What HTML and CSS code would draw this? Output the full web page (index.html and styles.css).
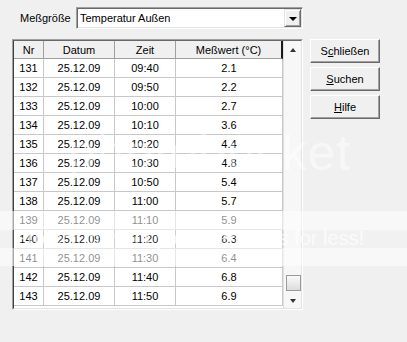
FILE: index.html
```html
<!DOCTYPE html>
<html lang="de">
<head>
  <meta charset="UTF-8">
  <title>Messwerte</title>
  <link rel="stylesheet" href="styles.css">
</head>
<body>
  <div class="dialog">
    <div class="top">
      <label for="messgroesse">Meßgröße</label>
      <div class="combo" id="messgroesse">
        <span class="value">Temperatur Außen</span>
        <span class="drop"><span class="arrow down"></span></span>
      </div>
    </div>

    <div class="main">
      <div class="list">
        <div class="list-inner">
          <table class="grid">
            <thead>
              <tr><th class="c-nr">Nr</th><th class="c-datum">Datum</th><th class="c-zeit">Zeit</th><th class="c-wert">Meßwert (°C)</th></tr>
            </thead>
            <tbody>
              <tr><td>131</td><td>25.12.09</td><td>09:40</td><td>2.1</td></tr>
              <tr><td>132</td><td>25.12.09</td><td>09:50</td><td>2.2</td></tr>
              <tr><td>133</td><td>25.12.09</td><td>10:00</td><td>2.7</td></tr>
              <tr><td>134</td><td>25.12.09</td><td>10:10</td><td>3.6</td></tr>
              <tr><td>135</td><td>25.12.09</td><td>10:20</td><td>4.4</td></tr>
              <tr><td>136</td><td>25.12.09</td><td>10:30</td><td>4.8</td></tr>
              <tr><td>137</td><td>25.12.09</td><td>10:50</td><td>5.4</td></tr>
              <tr><td>138</td><td>25.12.09</td><td>11:00</td><td>5.7</td></tr>
              <tr><td>139</td><td>25.12.09</td><td>11:10</td><td>5.9</td></tr>
              <tr><td>140</td><td>25.12.09</td><td>11:20</td><td>6.3</td></tr>
              <tr><td>141</td><td>25.12.09</td><td>11:30</td><td>6.4</td></tr>
              <tr><td>142</td><td>25.12.09</td><td>11:40</td><td>6.8</td></tr>
              <tr><td>143</td><td>25.12.09</td><td>11:50</td><td>6.9</td></tr>
            </tbody>
          </table>
          <div class="scrollbar">
            <span class="arrow up"></span>
            <span class="thumb"></span>
            <span class="arrow down"></span>
          </div>
        </div>
      </div>

      <div class="buttons">
        <button type="button">S<u>c</u>hließen</button>
        <button type="button"><u>S</u>uchen</button>
        <button type="button"><u>H</u>ilfe</button>
      </div>
    </div>
  </div>

  <!-- watermark of the original picture -->
  <div class="wm-logo">photobucket</div>
  <div class="wm-band">Protect more of your memories for less!</div>
</body>
</html>
```

FILE: styles.css
```css
body {
  margin: 0;
  width: 407px;
  height: 342px;
  background-color: #f0f0f0;
  font-family: "Liberation Sans", Arial, sans-serif;
  font-size: 11px;
  color: #000;
  position: relative;
  overflow: hidden;
}
.dialog {
  padding: 7px 0 0 12px;
}
.top {
  display: flex;
  align-items: center;
}
.top label {
  width: 56px;
  padding-left: 8px;
}
.combo {
  width: 227px;
  height: 22px;
  box-sizing: border-box;
  display: flex;
  background-color: #fff;
  border: 1px solid;
  border-color: #a0a0a0 #fff #fff #a0a0a0;
  box-shadow: inset 1px 1px 0 #696969, inset -1px -1px 0 #e3e3e3;
  padding: 1px;
}
.combo .value {
  flex: 1;
  padding-left: 2px;
  line-height: 18px;
}
.drop {
  width: 17px;
  box-sizing: border-box;
  background-color: #f0f0f0;
  border: 1px solid;
  border-color: #e3e3e3 #696969 #696969 #e3e3e3;
  box-shadow: inset 1px 1px 0 #fff, inset -1px -1px 0 #a0a0a0;
  display: flex;
  align-items: center;
  justify-content: center;
}
.arrow {
  display: block;
  width: 0;
  height: 0;
  border-left: 3px solid transparent;
  border-right: 3px solid transparent;
}
.arrow.down {
  border-top: 4px solid #000;
}
.arrow.up {
  border-bottom: 4px solid #000;
}
.drop .arrow.down {
  border-left-width: 4px;
  border-right-width: 4px;
  margin-top: 2px;
}
.main {
  display: flex;
  gap: 7px;
  margin-top: 10px;
}
.list {
  width: 291px;
  height: 271px;
  box-sizing: border-box;
  border: 1px solid;
  border-color: #a0a0a0 #fff #fff #a0a0a0;
}
.list-inner {
  height: 100%;
  box-sizing: border-box;
  border: 1px solid;
  border-color: #696969 #e3e3e3 #e3e3e3 #404040;
  background-color: #fff;
  display: flex;
  align-items: flex-start;
}
.grid {
  border-collapse: separate;
  border-spacing: 0;
  table-layout: fixed;
  width: 269px;
}
.grid th,
.grid td {
  padding: 0;
  text-align: center;
  font-weight: normal;
  border-right: 1px solid #c8c8c8;
  border-bottom: 1px solid #c8c8c8;
  white-space: nowrap;
  overflow: hidden;
}
.grid th {
  height: 17px;
  background-color: #f0f0f0;
  border-right-color: #a0a0a0;
  border-bottom-color: #a0a0a0;
}
.grid th.c-wert {
  border-right: 2px solid #1a1a1a;
}
.grid td {
  height: 18px;
}
.c-nr { width: 29px; }
.c-datum { width: 70px; }
.c-zeit { width: 60px; }
.c-wert { width: 105px; }
.scrollbar {
  width: 18px;
  height: 100%;
  background-color: #f7f7f7;
  border-left: 1px solid #e0e0e0;
  box-sizing: border-box;
  display: flex;
  flex-direction: column;
  align-items: center;
  padding: 7px 0 5px 1px;
}
.scrollbar .arrow.up {
  border-bottom-color: #333;
}
.scrollbar .thumb {
  margin-top: auto;
  width: 15px;
  height: 16px;
  box-sizing: border-box;
  border: 1px solid #9a9a9a;
  background: linear-gradient(to bottom, #fafafa, #dcdcdc);
  margin-bottom: 8px;
}
.scrollbar .arrow.down {
  border-top-color: #333;
}
.buttons {
  display: flex;
  flex-direction: column;
  gap: 4px;
}
button {
  width: 70px;
  height: 24px;
  padding: 0;
  font-family: inherit;
  font-size: 11px;
  color: #000;
  background-color: #f0f0f0;
  border: 1px solid;
  border-color: #fff #696969 #696969 #fff;
  box-shadow: inset -1px -1px 0 #a0a0a0;
}
.wm-logo {
  position: absolute;
  left: 68px;
  top: 124px;
  font-size: 50px;
  letter-spacing: 1px;
  color: rgba(255, 255, 255, 0.45);
  pointer-events: none;
}
.wm-band {
  position: absolute;
  left: 0;
  top: 211px;
  width: 407px;
  height: 55px;
  box-sizing: border-box;
  padding: 16px 0 0 14px;
  font-size: 20px;
  color: rgba(255, 255, 255, 0.7);
  background: linear-gradient(to bottom,
    rgba(255, 255, 255, 0.55) 0 34%,
    rgba(255, 255, 255, 0.1) 34% 68%,
    rgba(255, 255, 255, 0.55) 68%);
  white-space: nowrap;
  pointer-events: none;
}
```
